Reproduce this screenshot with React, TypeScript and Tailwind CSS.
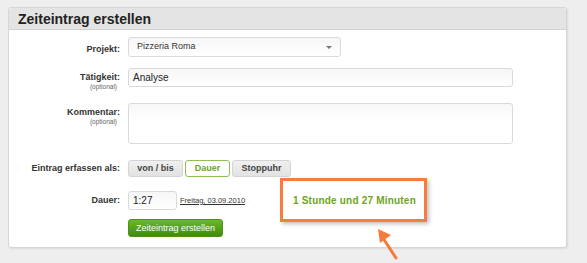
export default function App() {
  const font = { fontFamily: '"Liberation Sans", Arial, sans-serif' };
  return (
    <div
      className="w-[587px] h-[263px] overflow-hidden bg-[#eeeeee] pt-[7px] pl-[8px]"
      style={font}
    >
      {/* panel */}
      <div className="relative w-[559px] h-[241px] bg-white border border-[#d6d6d6] rounded-[3px] shadow-[1px_1px_2px_rgba(0,0,0,0.08)]">
        <div className="h-[22px] bg-[#e4e4e4] border-b border-[#d2d2d2] rounded-t-[3px] flex items-center pl-[9px]">
          <h1 className="text-[14px] font-bold text-[#222] leading-none">Zeiteintrag erstellen</h1>
        </div>

        <div className="pt-[7px]">
          {/* Projekt */}
          <div className="flex items-center">
            <Label text="Projekt:" />
            <div className="ml-[8px] w-[213px] h-[20px] border border-[#dadada] rounded-[3px] bg-gradient-to-b from-[#f6f6f6] to-white flex items-center pl-[8px] pr-[8px]">
              <span className="text-[9px] text-[#333] flex-1">Pizzeria Roma</span>
              <span className="w-0 h-0 border-l-[3px] border-r-[3px] border-t-[3px] border-l-transparent border-r-transparent border-t-[#777]" />
            </div>
          </div>

          {/* Tätigkeit */}
          <div className="flex items-start mt-[11px]">
            <Label text="Tätigkeit:" optional />
            <div className="ml-[8px] w-[385px] h-[19px] border border-[#dadada] rounded-[3px] bg-gradient-to-b from-[#f6f6f6] to-white flex items-center pl-[4px]">
              <span className="text-[10px] text-[#222]">Analyse</span>
            </div>
          </div>

          {/* Kommentar */}
          <div className="flex items-start mt-[12px]">
            <Label text="Kommentar:" optional />
            <div className="ml-[8px] w-[385px] h-[41px] border border-[#dadada] rounded-[3px] bg-gradient-to-b from-[#f7f7f7] to-white to-40%" />
          </div>

          {/* Eintrag erfassen als */}
          <div className="flex items-center mt-[16px]">
            <div className="w-[111px] text-right text-[9px] font-bold text-[#333] leading-[11px]">Eintrag erfassen als:</div>
            <div className="ml-[8px] flex gap-[2px] h-[17px]">
              <div className="w-[55px] h-full rounded-[3px] border border-[#d4d4d4] bg-gradient-to-b from-[#f0f0f0] to-[#e2e2e2] flex items-center justify-center text-[9px] font-bold text-[#444]">von / bis</div>
              <div className="w-[45px] h-full rounded-[3px] border border-[#8cc055] bg-white flex items-center justify-center text-[9px] font-bold text-[#6aa52a]">Dauer</div>
              <div className="w-[59px] h-full rounded-[3px] border border-[#d4d4d4] bg-gradient-to-b from-[#f0f0f0] to-[#e2e2e2] flex items-center justify-center text-[9px] font-bold text-[#444]">Stoppuhr</div>
            </div>
          </div>

          {/* Dauer */}
          <div className="flex items-center mt-[14px]">
            <div className="w-[111px] text-right text-[9px] font-bold text-[#333] leading-[11px]">Dauer:</div>
            <div className="ml-[8px] w-[49px] h-[19px] border border-[#dadada] rounded-[3px] bg-gradient-to-b from-[#f6f6f6] to-white flex items-center pl-[4px]">
              <span className="text-[10px] text-[#222]">1:27</span>
            </div>
            <a className="ml-[3px] text-[7.5px] text-[#333] underline">Freitag, 03.09.2010</a>
          </div>

          {/* Submit */}
          <div className="flex mt-[9px] pl-[119px]">
            <button className="w-[95px] h-[18px] rounded-[3px] border border-[#4e9115] bg-gradient-to-b from-[#6bb82a] to-[#3f8c0c] text-white text-[9px] leading-none">
              Zeiteintrag erstellen
            </button>
          </div>
        </div>

        {/* callout box */}
        <div className="absolute left-[271px] top-[170px] w-[147px] h-[44px] border-[3px] border-[#f57d3e] bg-white shadow-[2px_2px_4px_rgba(0,0,0,0.25)] flex items-center pl-[10px]">
          <span className="text-[10px] font-bold text-[#6ba520] tracking-[0.2px]">1 Stunde und 27 Minuten</span>
        </div>

        {/* arrow */}
        <svg className="absolute left-[362px] top-[218px] overflow-visible" width="30" height="40" viewBox="0 0 30 40">
          <line x1="25" y1="32" x2="12" y2="12" stroke="#f47b3b" strokeWidth="3" strokeLinecap="round" />
          <polygon points="7,3 20,9 9,17" fill="#f47b3b" />
        </svg>
      </div>
    </div>
  );
}

function Label({ text, optional }: { text: string; optional?: boolean }) {
  return (
    <div className="w-[111px] text-right pt-[4px]">
      <div className="text-[9px] font-bold text-[#333] leading-[11px]">{text}</div>
      {optional && <div className="text-[6.5px] text-[#666] leading-[8px] pr-[3px]">(optional)</div>}
    </div>
  );
}
